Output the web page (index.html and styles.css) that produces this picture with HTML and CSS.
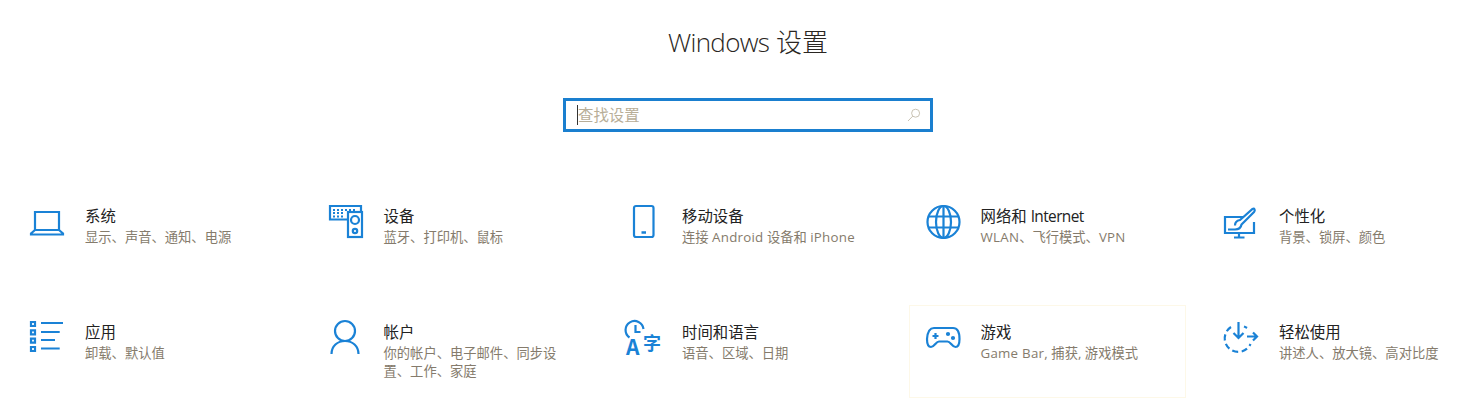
FILE: index.html
```html
<!DOCTYPE html>
<html lang="zh-CN">
<head>
    <meta charset="UTF-8">
    <title>Windows 设置</title>
    <link rel="stylesheet" href="styles.css">
</head>
<body>
    <div class="page">
        <h1 class="page-title"><span class="title-latin">Windows</span> 设置</h1>

        <div class="search">
            <span class="caret"></span>
            <span class="search-hint">查找设置</span>
            <svg class="search-icon" viewBox="0 0 14 14">
                <circle cx="8.6" cy="5.2" r="4"/>
                <path d="M5.8 8.1L1 13"/>
            </svg>
        </div>

        <div class="tiles">
            <div class="tile">
                <svg class="icon" viewBox="0 0 36 36">
                    <path d="M6 26V8h24v18"/>
                    <path d="M6 26L2 29.500V30.500h32v-1L30 26z"/>
                </svg>
                <div class="tile-text">
                    <div class="tile-name">系统</div>
                    <div class="tile-desc">显示、声音、通知、电源</div>
                </div>
            </div>

            <div class="tile">
                <svg class="icon" viewBox="0 0 36 36">
                    <path d="M20 15.500H2V2h31v5"/>
                    <path d="M5 6h2M9 6h2M13 6h2M17 6h2M21 6h2M25 6h2M5 9h2M9 9h2M13 9h2M5 12.500h2M9 12.500h2M13 12.500h2"/>
                    <rect x="20" y="8" width="14" height="25"/>
                    <circle cx="27" cy="16" r="4"/>
                    <circle cx="27" cy="27" r="2.200"/>
                </svg>
                <div class="tile-text">
                    <div class="tile-name">设备</div>
                    <div class="tile-desc">蓝牙、打印机、鼠标</div>
                </div>
            </div>

            <div class="tile">
                <svg class="icon" viewBox="0 0 36 36">
                    <rect x="8" y="2" width="19.500" height="31" rx="2"/>
                    <path class="thick" d="M15.500 28.500h4.500"/>
                </svg>
                <div class="tile-text">
                    <div class="tile-name">移动设备</div>
                    <div class="tile-desc">连接 <span class="latin">Android</span> 设备和 <span class="latin">iPhone</span></div>
                </div>
            </div>

            <div class="tile">
                <svg class="icon" viewBox="0 0 36 36">
                    <circle cx="18.500" cy="18" r="16"/>
                    <ellipse cx="18.500" cy="18" rx="7.500" ry="16"/>
                    <path d="M18.500 2v32M3.500 12.500h30M3.500 23.500h30"/>
                </svg>
                <div class="tile-text">
                    <div class="tile-name">网络和 <span class="latin">Internet</span></div>
                    <div class="tile-desc"><span class="latin">WLAN</span>、飞行模式、<span class="latin">VPN</span></div>
                </div>
            </div>

            <div class="tile">
                <svg class="icon" viewBox="0 0 36 36">
                    <path d="M21 13H2v16h29V18"/>
                    <path d="M16 29v4.500M11 33.500h10.500"/>
                    <path d="M5 25.500h7c4 0 6-2 6.500-5L31 8c1.500-2 .5-4-1.500-3L17 16c-3 .5-5 2.500-5 5.500"/>
                </svg>
                <div class="tile-text">
                    <div class="tile-name">个性化</div>
                    <div class="tile-desc">背景、锁屏、颜色</div>
                </div>
            </div>

            <div class="tile">
                <svg class="icon" viewBox="0 0 36 36">
                    <path class="dots" d="M2 2h4v4H2zM2 10.300h4v4H2zM2 18.600h4v4H2zM2 27h4v4H2z"/>
                    <path d="M12 3h22M12 12h18.700M12 20h14M12 28.500h18.700"/>
                </svg>
                <div class="tile-text">
                    <div class="tile-name">应用</div>
                    <div class="tile-desc">卸载、默认值</div>
                </div>
            </div>

            <div class="tile">
                <svg class="icon" viewBox="0 0 36 36">
                    <circle cx="17" cy="11" r="10"/>
                    <path d="M3.500 34c0-8 6-13 13.500-13s13.500 5 13.500 13"/>
                </svg>
                <div class="tile-text">
                    <div class="tile-name">帐户</div>
                    <div class="tile-desc">你的帐户、电子邮件、同步设置、工作、家庭</div>
                </div>
            </div>

            <div class="tile">
                <svg class="icon" viewBox="0 0 36 36">
                    <path d="M3.500 17.500A9 9 0 1 1 17.500 9"/>
                    <path d="M9.500 5v7h5"/>
                    <text class="icon-text" x="0" y="34.500" font-size="21">A</text>
                    <text class="icon-text" x="17" y="30" font-size="18">字</text>
                </svg>
                <div class="tile-text">
                    <div class="tile-name">时间和语言</div>
                    <div class="tile-desc">语音、区域、日期</div>
                </div>
            </div>

            <div class="tile tile-hover">
                <svg class="icon" viewBox="0 0 36 36">
                    <path d="M9 8h19c4 0 6.500 4 6.500 11 0 5-1 8-4 8-3.500 0-5-5.500-8-5.500h-8.500c-3 0-4.500 5.500-8 5.500-3 0-4-3-4-8C2.500 12 5 8 9 8z"/>
                    <path d="M7.500 16h6M10.500 13v6"/>
                    <circle class="dots" cx="23" cy="14" r="1"/>
                    <circle class="dots" cx="28" cy="18" r="1"/>
                </svg>
                <div class="tile-text">
                    <div class="tile-name">游戏</div>
                    <div class="tile-desc"><span class="latin">Game Bar,</span> 捕获, 游戏模式</div>
                </div>
            </div>

            <div class="tile">
                <svg class="icon" viewBox="0 0 36 36">
                    <path class="dashed" d="M8 7A13.500 13.500 0 1 0 27.500 24"/>
                    <path class="dashed" d="M21 6.500A13.500 13.500 0 0 1 24 8"/>
                    <path d="M15.500 2v16M10.500 13l5 5 5-5"/>
                    <path d="M24 16.500h10M30 12.500l4 4-4 4"/>
                </svg>
                <div class="tile-text">
                    <div class="tile-name">轻松使用</div>
                    <div class="tile-desc">讲述人、放大镜、高对比度</div>
                </div>
            </div>
        </div>
    </div>
</body>
</html>
```

FILE: styles.css
```css
body {
    margin: 0;
    background-color: #fff;
    color: #222;
    font-family: "Open Sans", "Noto Sans CJK SC", sans-serif;
    overflow: hidden;
}
.page {
    width: 1496px;
    padding-top: 24px;
}
.page-title {
    margin: 0 0 38px;
    font-size: 26px;
    font-weight: 300;
    line-height: 36px;
    text-align: center;
    color: #2a2622;
}
.title-latin {
    letter-spacing: -.7px;
}
.search {
    box-sizing: border-box;
    display: flex;
    align-items: center;
    width: 370px;
    height: 34px;
    margin: 0 auto 57px;
    padding: 0 9px 0 11px;
    border: 3px solid #1a7fcf;
}
.caret {
    width: 1px;
    height: 20px;
    background-color: #333;
}
.search-hint {
    flex: 1;
    padding-bottom: 2px;
    font-size: 15.4px;
    color: #b8ae98;
}
.search-icon {
    width: 14px;
    height: 14px;
    fill: none;
    stroke: #c9c3b4;
    stroke-width: 1;
}
.tiles {
    display: grid;
    grid-template-columns: repeat(5, 277px);
    grid-auto-rows: 93px;
    column-gap: 21.5px;
    row-gap: 23px;
    padding-left: 13.5px;
}
.tile {
    box-sizing: border-box;
    display: flex;
    gap: 20px;
    padding: 15px 15px 0 15.5px;
    border: 1px solid transparent;
}
.tile-hover {
    border-color: #fdf8e8;
}
.tile-text {
    margin-top: 1px;
}
.tile-name {
    font-size: 15.4px;
    line-height: 22px;
    color: #222;
}
.tile-name .latin {
    letter-spacing: -.6px;
}
.tile-desc {
    font-size: 13.3px;
    line-height: 18px;
    color: #857b6c;
}
.tile-desc .latin {
    letter-spacing: .25px;
}
.icon {
    flex: none;
    width: 36px;
    height: 36px;
    margin: -1px 0 0 -1px;
    fill: none;
    stroke: #1a82d6;
    stroke-width: 2.2;
    overflow: visible;
}
.icon .thick {
    stroke-width: 2.5;
}
.icon .dashed {
    stroke-dasharray: 6 3.5;
}
.icon-text {
    fill: #1a82d6;
    stroke: none;
    font-family: "Noto Sans CJK SC", sans-serif;
    font-weight: 700;
}
```
